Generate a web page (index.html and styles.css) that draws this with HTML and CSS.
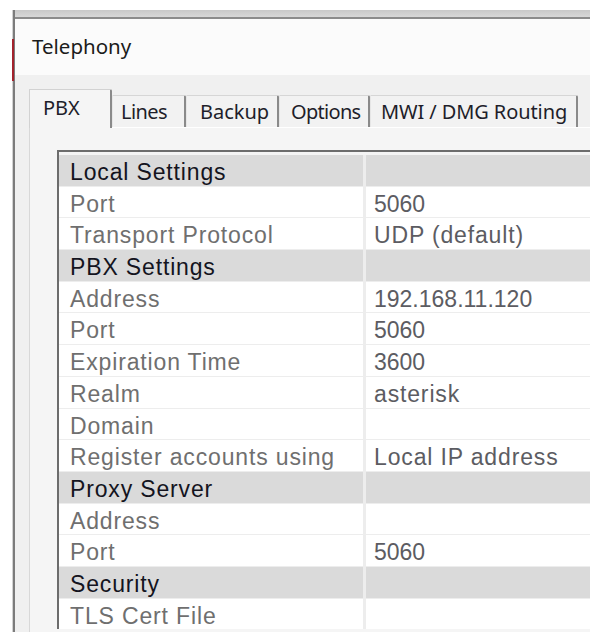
FILE: index.html
```html
<!DOCTYPE html>
<html>
<head>
<meta charset="utf-8">
<title>Telephony</title>
<link rel="stylesheet" href="styles.css">
</head>
<body>
<div class="window">
  <div class="topbar"></div>
  <div class="title">Telephony</div>
  <div class="client">
    <div class="tabs">
      <div class="tab tab-pbx selected">PBX</div>
      <div class="tab tab-lines">Lines</div>
      <div class="tab tab-backup">Backup</div>
      <div class="tab tab-options">Options</div>
      <div class="tab tab-mwi">MWI / DMG Routing</div>
    </div>
    <div class="panel">
      <div class="grid">
        <div class="cell head">Local Settings</div><div class="cell head"></div>
        <div class="cell label">Port</div><div class="cell value num">5060</div>
        <div class="cell label">Transport Protocol</div><div class="cell value">UDP (default)</div>
        <div class="cell head">PBX Settings</div><div class="cell head"></div>
        <div class="cell label">Address</div><div class="cell value num">192.168.11.120</div>
        <div class="cell label">Port</div><div class="cell value num">5060</div>
        <div class="cell label">Expiration Time</div><div class="cell value num">3600</div>
        <div class="cell label">Realm</div><div class="cell value">asterisk</div>
        <div class="cell label">Domain</div><div class="cell value"></div>
        <div class="cell label">Register accounts using</div><div class="cell value">Local IP address</div>
        <div class="cell head">Proxy Server</div><div class="cell head"></div>
        <div class="cell label">Address</div><div class="cell value"></div>
        <div class="cell label">Port</div><div class="cell value num">5060</div>
        <div class="cell head">Security</div><div class="cell head"></div>
        <div class="cell label">TLS Cert File</div><div class="cell value"></div>
      </div>
    </div>
  </div>
</div>
<div class="redmark"></div>
</body>
</html>
```

FILE: styles.css
```css
html, body {
  margin: 0;
  padding: 0;
  background: #ffffff;
  width: 600px;
  height: 641px;
  overflow: hidden;
}

.window {
  margin: 10px 0 0 13px;
  width: 575px;
  height: 622px;
  overflow: hidden;
  background: #f0f0f0;
  border-left: 2px solid #7c7c7c;
  box-shadow: -1px 0 0 #d2d2d2;
  display: flex;
  flex-direction: column;
  font-family: "Noto Sans", "Open Sans", sans-serif;
}

.topbar {
  height: 7px;
  background: linear-gradient(#c9c9c9, #d8d8d8);
  border-bottom: 2px solid #8c8c8c;
  flex: none;
}

.title {
  flex: none;
  height: 56px;
  box-sizing: border-box;
  background: #fbfbfb;
  padding: 13px 0 0 17px;
  font-size: 20.5px;
  color: #1b1b1b;
  line-height: 28px;
}

.client {
  flex: 1;
  display: flex;
  flex-direction: column;
  padding-left: 14px;
}

.tabs {
  margin-top: 14px;
  height: 38px;
  display: flex;
  align-items: flex-end;
  flex: none;
  position: relative;
  z-index: 1;
}

.tab {
  box-sizing: border-box;
  height: 32px;
  background: #f2f2f2;
  border-top: 1px solid #d6d6d6;
  border-left: 1px solid #e6e6e6;
  border-right: 2px solid #8a8a8a;
  border-top-right-radius: 2px;
  font-size: 20px;
  color: #1e1e2a;
  line-height: 28px;
  padding-top: 2px;
  white-space: nowrap;
}

.tab.selected {
  height: 39px;
  margin-bottom: -1px;
  background: #f5f5f5;
  border-left: 1px solid #d2d2d2;
  border-top: 1px solid #d2d2d2;
  padding-top: 4px;
}

.tab-pbx { width: 83px; padding-left: 13px; }
.tab-lines { width: 74px; padding-left: 8px; letter-spacing: -0.6px; }
.tab-backup { width: 93px; padding-left: 13px; }
.tab-options { width: 91px; padding-left: 11px; letter-spacing: -0.7px; }
.tab-mwi { width: 208px; padding-left: 10px; letter-spacing: -0.1px; }

.panel {
  flex: 1;
  background: #f5f5f5;
  border-left: 1px solid #d8d8d8;
  border-top: 1px solid #ffffff;
  padding: 22px 0 0 27px;
  overflow: hidden;
}

.grid {
  width: 620px;
  display: grid;
  grid-template-columns: 304px 1fr;
  grid-auto-rows: 30.7px;
  column-gap: 3px;
  row-gap: 1px;
  background: #ededed;
  border-top: 2px solid #6c6c6c;
  border-left: 2px solid #6c6c6c;
  padding-top: 3px;
  box-shadow: inset 0 3px 0 #f4f4f4;
  font-family: "Liberation Sans", Arial, sans-serif;
  font-size: 23px;
}

.cell {
  background: #ffffff;
  line-height: 30.7px;
  padding-top: 2px;
  box-sizing: border-box;
  white-space: nowrap;
  overflow: hidden;
  letter-spacing: 0.85px;
}

.cell.head {
  background: #dadada;
  color: #14141e;
  padding-left: 11px;
}

.cell.label {
  color: #6f6f6f;
  padding-left: 11px;
}

.cell.value {
  color: #5c5c62;
  padding-left: 8px;
}

.cell.num {
  letter-spacing: 0;
}

.redmark {
  position: absolute;
  left: 12px;
  top: 39px;
  width: 2px;
  height: 42px;
  background: #a3222c;
}
```
